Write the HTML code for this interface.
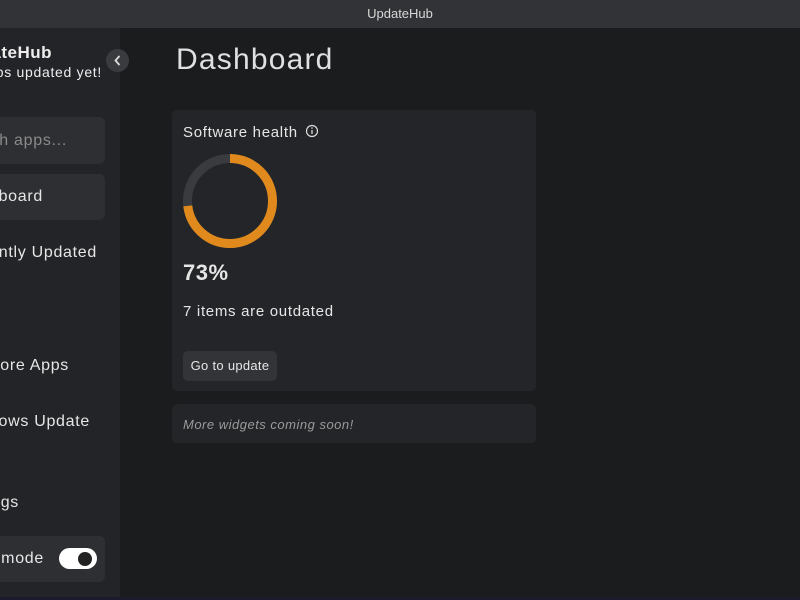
<!DOCTYPE html>
<html><head><style>
body{margin:0;width:800px;height:600px;overflow:hidden;background:#1b1c1e;font-family:"Liberation Sans",sans-serif;color:#e6e6e6;position:relative}
.a{position:absolute;white-space:nowrap}
.r{position:absolute;white-space:nowrap;text-align:right}
.s{letter-spacing:0.7px}
</style></head><body>
<div class="a" style="left:0;top:0;width:800px;height:28px;background:#323336;color:#d8d8d8;font-size:13px;line-height:28px;text-align:center">UpdateHub</div>
<div class="a" style="left:0;top:28px;width:120px;height:572px;background:#232427;overflow:hidden">
  <div class="r" style="right:68px;top:15px;font-size:17px;font-weight:bold;color:#eee;letter-spacing:0.5px">UpdateHub</div>
  <div class="r s" style="right:18px;top:36px;font-size:14px;color:#eee">No apps updated yet!</div>
  <div class="a" style="left:-10px;top:89px;width:115px;height:47px;background:#2e2f32;border-radius:6px"></div>
  <div class="r s" style="right:53px;top:104px;font-size:16px;color:#8a8a8a">Search apps...</div>
  <div class="a" style="left:-10px;top:146px;width:115px;height:46px;background:#2e2f32;border-radius:6px"></div>
  <div class="r s" style="right:77px;top:160px;font-size:16px">Dashboard</div>
  <div class="r s" style="right:23px;top:216px;font-size:16px">Recently Updated</div>
  <div class="r s" style="right:51px;top:329px;font-size:16px">Explore Apps</div>
  <div class="r s" style="right:30px;top:385px;font-size:16px">Windows Update</div>
  <div class="r s" style="right:101px;top:466px;font-size:16px">Settings</div>
  <div class="a" style="left:-10px;top:508px;width:115px;height:46px;background:#2e2f32;border-radius:6px"></div>
  <div class="r s" style="right:76px;top:522px;font-size:16px">Dark mode</div>
  <div class="a" style="left:59px;top:520px;width:38px;height:21px;background:#fff;border-radius:11px"></div>
  <div class="a" style="left:78px;top:524px;width:14px;height:14px;background:#222;border-radius:50%"></div>
</div>
<div class="a" style="left:106px;top:49px;width:23px;height:23px;border-radius:50%;background:#3a3b3e"></div>
<svg class="a" style="left:106px;top:49px" width="23" height="23"><path d="M13 7.5 L9.5 11.5 L13 15.5" stroke="#ddd" stroke-width="1.8" fill="none" stroke-linecap="round"/></svg>
<div class="a" style="left:176px;top:43px;font-size:30px;color:#e0e0e0;letter-spacing:1.2px">Dashboard</div>
<div class="a" style="left:172px;top:110px;width:364px;height:281px;background:#242528;border-radius:5px"></div>
<div class="a s" style="left:183px;top:124px;font-size:15px">Software health</div>
<svg class="a" style="left:305px;top:124px" width="14" height="14"><circle cx="7" cy="7" r="5.5" stroke="#ddd" stroke-width="1.2" fill="none"/><line x1="7" y1="6" x2="7" y2="10" stroke="#ddd" stroke-width="1.3"/><circle cx="7" cy="4" r="0.8" fill="#ddd"/></svg>
<svg class="a" style="left:180px;top:151px" width="100" height="100">
<circle cx="50" cy="50" r="42.5" stroke="#3a3b3e" stroke-width="9" fill="none"/>
<circle cx="50" cy="50" r="42.5" stroke="#e08a1e" stroke-width="9" fill="none" stroke-dasharray="195 400" transform="rotate(-90 50 50)"/>
</svg>
<div class="a" style="left:183px;top:260px;font-size:22px;font-weight:bold;color:#e6e6e6;letter-spacing:0.5px">73%</div>
<div class="a s" style="left:183px;top:303px;font-size:15px">7 items are outdated</div>
<div class="a" style="left:183px;top:351px;width:94px;height:30px;background:#333437;border-radius:5px;font-size:13px;line-height:30px;text-align:center;letter-spacing:0.3px">Go to update</div>
<div class="a" style="left:172px;top:404px;width:364px;height:39px;background:#242528;border-radius:5px"></div>
<div class="a" style="left:183px;top:417px;font-size:13px;font-style:italic;color:#9a9a9a;letter-spacing:0.5px">More widgets coming soon!</div>
<div class="a" style="left:0;top:597px;width:800px;height:3px;background:#1c1b2e"></div>
</body></html>
